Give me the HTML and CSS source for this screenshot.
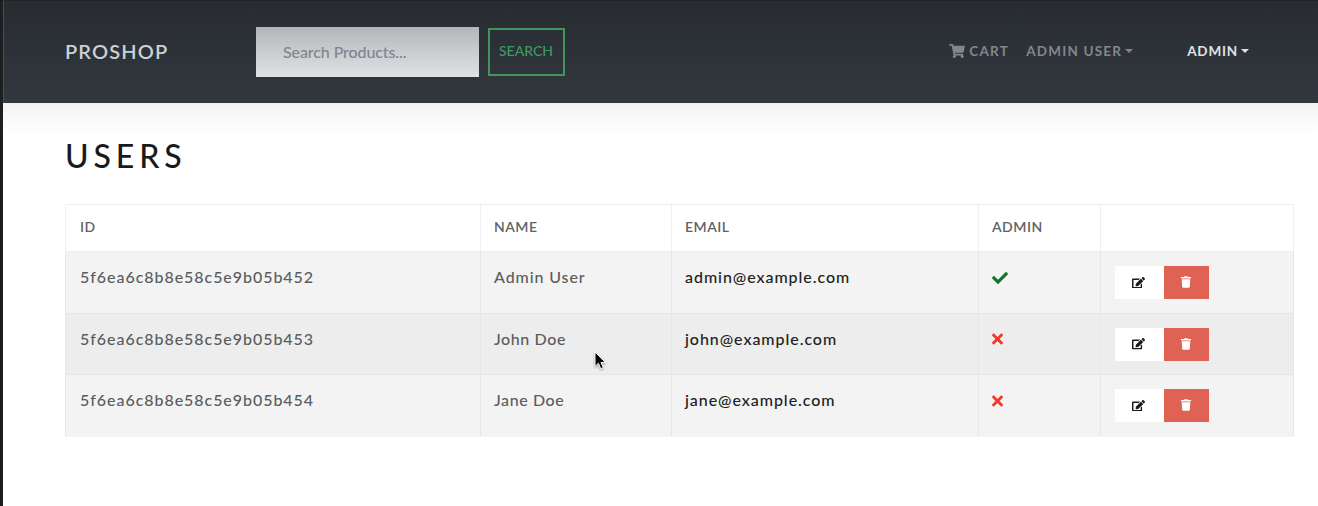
FILE: index.html
```html
<!DOCTYPE html>
<html lang="en">
<head>
<meta charset="utf-8">
<title>ProShop</title>
<link rel="stylesheet" href="styles.css">
</head>
<body>
<svg class="sprite" aria-hidden="true">
  <symbol id="cart" viewBox="0 0 576 512"><path d="M528.12 301.319l47.273-208C578.806 78.301 567.391 64 551.99 64H159.208l-9.166-44.81C147.758 8.021 137.93 0 126.529 0H24C10.745 0 0 10.745 0 24v16c0 13.255 10.745 24 24 24h69.883l70.248 343.435C147.325 417.1 136 435.222 136 456c0 30.928 25.072 56 56 56s56-25.072 56-56c0-15.674-6.447-29.835-16.824-40h209.647C430.447 426.165 424 440.326 424 456c0 30.928 25.072 56 56 56s56-25.072 56-56c0-22.172-12.888-41.332-31.579-50.405l5.517-24.276c3.413-15.018-8.002-29.319-23.403-29.319H218.117l-6.545-32h293.145c11.206 0 20.92-7.754 23.403-18.681z"/></symbol>
  <symbol id="check" viewBox="0 0 512 512"><path d="M173.898 439.404l-166.4-166.4c-9.997-9.997-9.997-26.206 0-36.204l36.203-36.204c9.997-9.998 26.207-9.998 36.204 0L192 312.69 432.095 72.596c9.997-9.997 26.207-9.997 36.204 0l36.203 36.204c9.997 9.997 9.997 26.206 0 36.204l-294.4 294.401c-9.998 9.997-26.207 9.997-36.204-.001z"/></symbol>
  <symbol id="times" viewBox="0 0 352 512"><path d="M242.72 256l100.07-100.07c12.28-12.28 12.28-32.19 0-44.48l-22.24-22.24c-12.28-12.28-32.19-12.28-44.48 0L176 189.28 75.93 89.21c-12.28-12.28-32.19-12.28-44.48 0L9.21 111.45c-12.28 12.28-12.28 32.19 0 44.48L109.28 256 9.21 356.07c-12.28 12.28-12.28 32.19 0 44.48l22.24 22.24c12.28 12.28 32.2 12.28 44.48 0L176 322.72l100.07 100.07c12.28 12.28 32.2 12.28 44.48 0l22.24-22.24c12.28-12.28 12.28-32.19 0-44.48L242.72 256z"/></symbol>
  <symbol id="edit" viewBox="0 0 576 512"><path d="M402.6 83.2l90.2 90.2c3.8 3.8 3.8 10 0 13.800L274.400 405.600l-92.800 10.300c-12.400 1.400-22.900-9.100-21.500-21.500l10.300-92.800L388.800 83.200c3.800-3.800 10-3.800 13.800 0zm162-22.900l-48.800-48.800c-15.200-15.200-39.900-15.200-55.200 0l-35.400 35.400c-3.800 3.800-3.800 10 0 13.800l90.200 90.200c3.800 3.800 10 3.800 13.800 0l35.400-35.400c15.200-15.300 15.200-40 0-55.200zM384 346.200V448H64V128h229.800c3.200 0 6.200-1.300 8.500-3.500l40-40c7.600-7.600 2.200-20.500-8.500-20.500H48C21.500 64 0 85.500 0 112v352c0 26.500 21.500 48 48 48h352c26.500 0 48-21.500 48-48V306.200c0-10.700-12.900-16-20.500-8.500l-40 40c-2.200 2.300-3.500 5.300-3.500 8.500z"/></symbol>
  <symbol id="trash" viewBox="0 0 448 512"><path d="M432 32H312l-9.400-18.700A24 24 0 0 0 281.100 0H166.800a23.720 23.720 0 0 0-21.400 13.300L136 32H16A16 16 0 0 0 0 48v32a16 16 0 0 0 16 16h416a16 16 0 0 0 16-16V48a16 16 0 0 0-16-16zM53.200 467a48 48 0 0 0 47.900 45h245.800a48 48 0 0 0 47.900-45L416 128H32z"/></symbol>
</svg>
<header class="navbar">
  <a class="brand">PROSHOP</a>
  <form class="search">
    <input class="search-input" type="text" placeholder="Search Products...">
    <button class="search-button" type="button">SEARCH</button>
  </form>
  <nav class="nav">
    <a class="nav-link cart-link"><svg class="cart-icon"><use href="#cart"/></svg><span>CART</span></a>
    <a class="nav-link user-link"><span>ADMIN USER</span><i class="caret"></i></a>
    <a class="nav-link nav-active"><span>ADMIN</span><i class="caret"></i></a>
  </nav>
</header>
<main class="content">
  <h1 class="title">USERS</h1>
  <table class="users">
    <colgroup><col class="col-id"><col class="col-name"><col class="col-email"><col class="col-admin"><col class="col-actions"></colgroup>
    <thead>
      <tr><th>ID</th><th>NAME</th><th>EMAIL</th><th>ADMIN</th><th></th></tr>
    </thead>
    <tbody>
      <tr>
        <td class="id">5f6ea6c8b8e58c5e9b05b452</td><td class="name">Admin User</td><td><a class="email">admin@example.com</a></td>
        <td><svg class="status yes"><use href="#check"/></svg></td>
        <td><div class="actions"><button class="btn edit"><svg class="edit-icon"><use href="#edit"/></svg></button><button class="btn delete"><svg class="trash-icon"><use href="#trash"/></svg></button></div></td>
      </tr>
      <tr>
        <td class="id">5f6ea6c8b8e58c5e9b05b453</td><td class="name short">John Doe</td><td><a class="email">john@example.com</a></td>
        <td><svg class="status no"><use href="#times"/></svg></td>
        <td><div class="actions"><button class="btn edit"><svg class="edit-icon"><use href="#edit"/></svg></button><button class="btn delete"><svg class="trash-icon"><use href="#trash"/></svg></button></div></td>
      </tr>
      <tr>
        <td class="id">5f6ea6c8b8e58c5e9b05b454</td><td class="name short">Jane Doe</td><td><a class="email">jane@example.com</a></td>
        <td><svg class="status no"><use href="#times"/></svg></td>
        <td><div class="actions"><button class="btn edit"><svg class="edit-icon"><use href="#edit"/></svg></button><button class="btn delete"><svg class="trash-icon"><use href="#trash"/></svg></button></div></td>
      </tr>
    </tbody>
  </table>
</main>
<svg class="cursor" viewBox="0 0 12 19"><path d="M1 1v14.500l3.400-3.200 2.300 5.400 2.600-1.100-2.300-5.200h4.500z"/></svg>
</body>
</html>
```
FILE: styles.css
```css
* { box-sizing: border-box; }
body {
  margin: 0;
  min-height: 506px;
  border-left: 3px solid #1d1e20;
  background: #fff;
  color: #1a1a1a;
  font-family: Lato, "Open Sans", sans-serif;
  overflow: hidden;
}
.sprite { display: none; }
svg { fill: currentColor; }
.navbar {
  display: flex;
  align-items: center;
  height: 103px;
  padding: 0 69px 0 61px;
  border-top: 1px solid #202428;
  border-left: 1px solid #4a4f55;
  background: linear-gradient(#282c31, #32383f);
}
.brand {
  width: 191px;
  padding-bottom: 3px;
  color: #ced0d1;
  font-size: 20px;
  font-weight: 600;
  letter-spacing: 1.15px;
}
.search { display: flex; align-items: center; gap: 9px; }
.search-input {
  width: 223px;
  height: 50px;
  padding: 0 27px 2px;
  border: 0;
  border-radius: 0;
  background: linear-gradient(#b4b5b7, #cbccd0 50%, #e0e1e3);
  font: 500 16px Lato, sans-serif;
  letter-spacing: -0.1px;
}
.search-input::placeholder { color: #7f858c; opacity: 1; }
.search-button {
  width: 77px;
  height: 48px;
  padding: 0 1px 3px 0;
  border: 2px solid #43935f;
  background: transparent;
  color: #3d9b62;
  font: 500 14px Lato, sans-serif;
}
.nav { display: flex; margin-left: auto; padding-bottom: 2px; }
.nav-link {
  display: flex;
  align-items: center;
  color: #83878b;
  font-size: 13.5px;
  font-weight: 700;
  letter-spacing: 1px;
}
.cart-link { margin-right: 17px; letter-spacing: 1.3px; }
.cart-icon { width: 16px; height: 14px; margin-right: 4px; }
.user-link { margin-right: 54px; letter-spacing: 1.2px; }
.nav-active { color: #e0e1e2; letter-spacing: 0.8px; }
.caret {
  margin-left: 3px;
  border: 4px solid transparent;
  border-top-color: currentColor;
  border-bottom: 0;
}
.content {
  padding: 35px 25px 0 62px;
  background: linear-gradient(#f3f3f4, #fff 32px);
}
.title {
  margin: 0;
  height: 66px;
  font-size: 32px;
  font-weight: 500;
  line-height: 36px;
  letter-spacing: 4.9px;
}
.users {
  width: 1229px;
  table-layout: fixed;
  border-collapse: collapse;
}
.col-id { width: 415px; }
.col-name { width: 191px; }
.col-email { width: 307px; }
.col-admin { width: 122px; }
.col-actions { width: 193px; }
.users th, .users td {
  border: 1px solid #e7e7e7;
  padding: 0 13px;
  text-align: left;
}
.users th {
  height: 47px;
  padding-bottom: 3px;
  border-color: #efefef;
  color: #5f6264;
  font-size: 14px;
  font-weight: 600;
  letter-spacing: 0.5px;
}
.users td {
  height: 61.5px;
  padding-top: 14px;
  color: #5a5c5e;
  font-size: 16px;
  font-weight: 500;
  line-height: 22px;
  letter-spacing: 0.95px;
  vertical-align: top;
}
.users tbody tr { background: #f3f3f3; }
.users tbody tr:nth-child(2) { background: #ededed; }
.users tbody tr:last-child td { border-bottom-color: #f3f3f3; }
.users th:first-child, .users td:first-child { padding-left: 14px; }
.users td:last-child { padding-left: 13.5px; }
.users .name { letter-spacing: 0.9px; }
.users .short { letter-spacing: 0.6px; }
.users .email { color: #202020; }
.status { display: block; height: 16px; margin-top: 3.5px; }
.yes { width: 16px; color: #13752a; }
.no { width: 11px; color: #f23a2c; }
.actions { display: flex; }
.btn {
  display: flex;
  align-items: center;
  justify-content: center;
  height: 33px;
  padding: 0;
  border: 0;
}
.edit { width: 49px; padding-right: 2px; background: #fff; color: #1a1a1a; }
.delete { width: 45px; padding-right: 1px; padding-bottom: 1px; background: #df6254; color: #fff; }
.edit-icon { width: 13px; height: 11.500px; }
.trash-icon { width: 10px; height: 12px; }
.cursor {
  position: absolute;
  top: 351px;
  left: 594px;
  width: 12px;
  height: 19px;
  overflow: visible;
  fill: #050505;
  stroke: #fff;
  stroke-width: 1;
  filter: drop-shadow(0 1px 1px rgba(0, 0, 0, .35));
}
```
